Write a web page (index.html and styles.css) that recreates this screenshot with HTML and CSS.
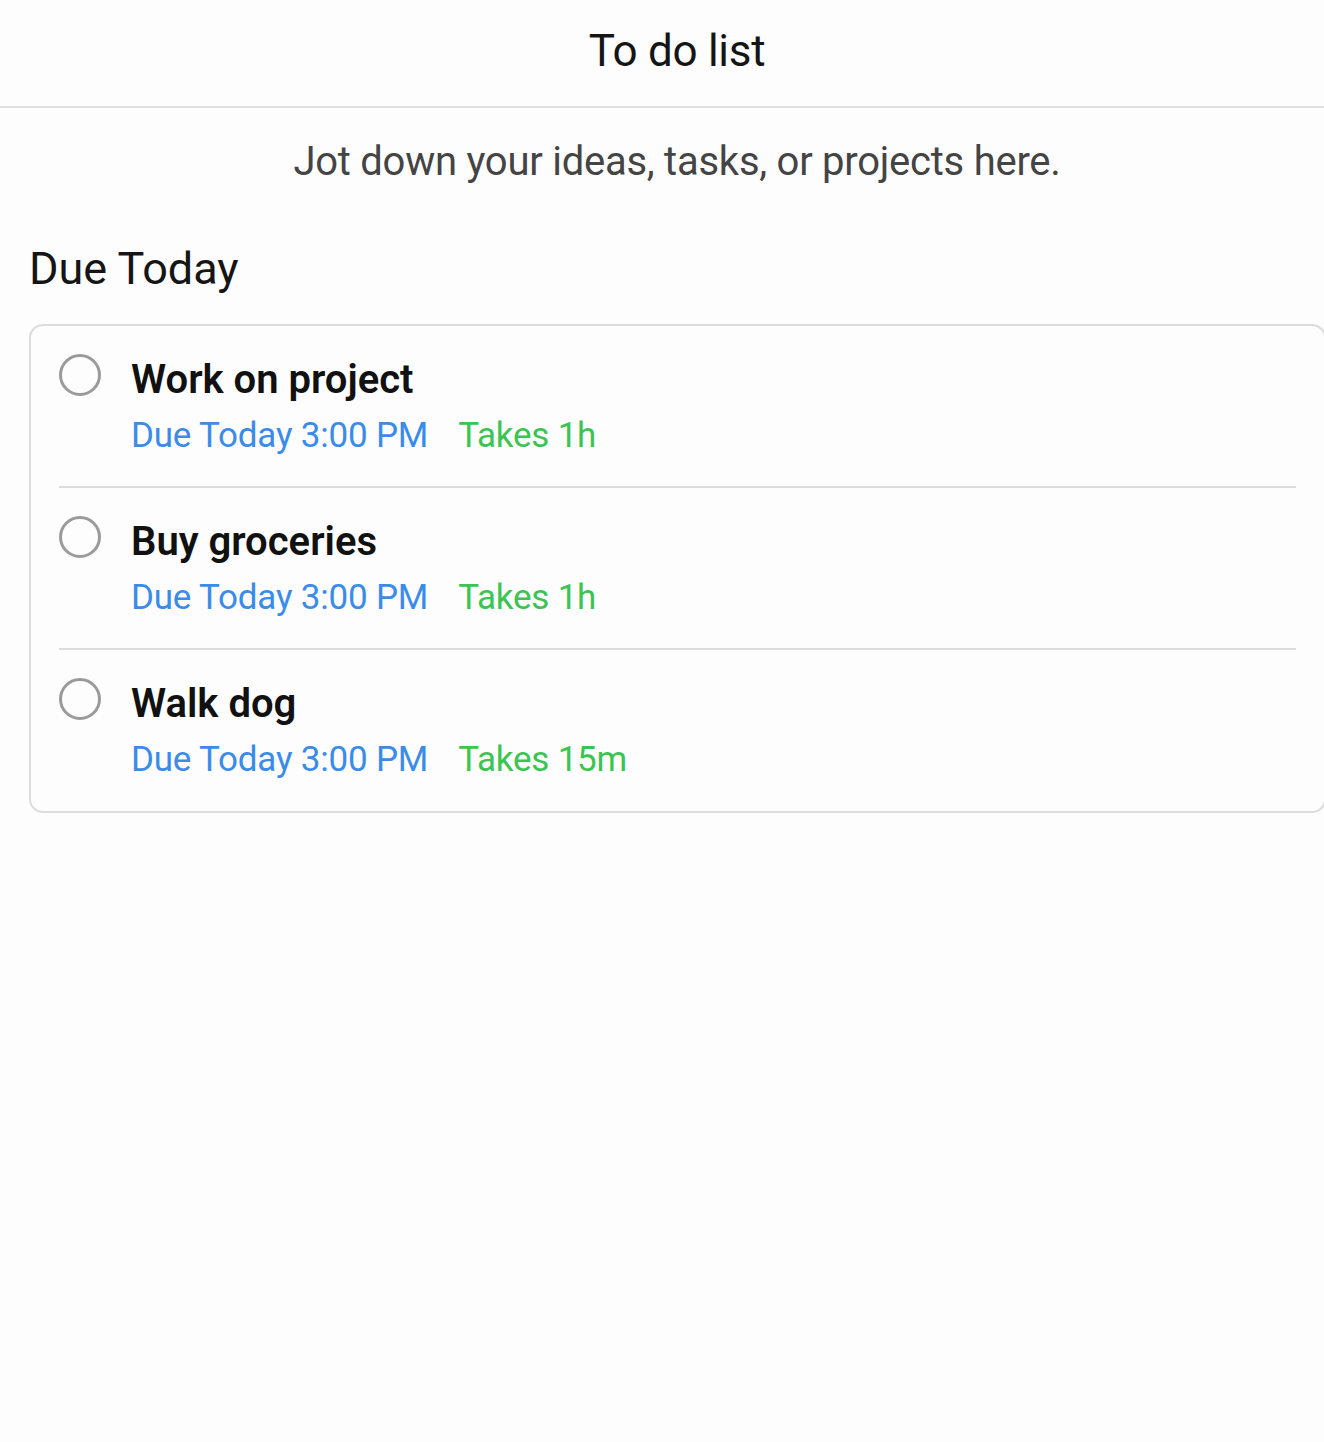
FILE: index.html
```html
<!DOCTYPE html>
<html lang="en">
<head>
<meta charset="utf-8">
<title>To do list</title>
<link rel="stylesheet" href="styles.css">
</head>
<body>
<header class="topbar"><h1 class="title">To do list</h1></header>
<main class="content">
  <p class="intro">Jot down your ideas, tasks, or projects here.</p>
  <section class="group">
    <h2 class="group-title">Due Today</h2>
    <ul class="card">
      <li class="task">
        <span class="check"></span>
        <div class="task-body">
          <div class="task-name">Work on project</div>
          <div class="task-meta"><span class="due">Due Today 3:00 PM</span><span class="takes">Takes 1h</span></div>
        </div>
      </li>
      <li class="task">
        <span class="check"></span>
        <div class="task-body">
          <div class="task-name">Buy groceries</div>
          <div class="task-meta"><span class="due">Due Today 3:00 PM</span><span class="takes">Takes 1h</span></div>
        </div>
      </li>
      <li class="task">
        <span class="check"></span>
        <div class="task-body">
          <div class="task-name">Walk dog</div>
          <div class="task-meta"><span class="due">Due Today 3:00 PM</span><span class="takes">Takes 15m</span></div>
        </div>
      </li>
    </ul>
  </section>
</main>
</body>
</html>
```
FILE: styles.css
```css
html, body {
  margin: 0;
  padding: 0;
  background: #fdfdfd;
}
html {
  overflow: hidden;
}
body {
  font-family: Roboto, "Open Sans", sans-serif;
  color: #111;
  width: 1354px;
  height: 1442px;
}
.topbar {
  box-sizing: border-box;
  height: 108px;
  padding-top: 21px;
  border-bottom: 2px solid #dedede;
  text-align: center;
}
.title {
  margin: 0;
  font-size: 44px;
  font-weight: 400;
  letter-spacing: -0.3px;
  line-height: 60px;
  color: #151515;
}
.intro {
  margin: 29px 0 0;
  text-align: center;
  font-size: 40px;
  letter-spacing: -0.25px;
  line-height: 50px;
  color: #444;
}
.group {
  padding: 0 28px 0 29px;
}
.group-title {
  margin: 54px 0 0;
  font-size: 45px;
  font-weight: 400;
  line-height: 56px;
  color: #151515;
}
.card {
  list-style: none;
  margin: 27px 0 0;
  padding: 0 28px;
  border: 2px solid #dcdcdc;
  border-radius: 14px;
  background: #fdfdfd;
}
.task {
  display: flex;
  align-items: flex-start;
  gap: 30px;
  padding: 28px 0 27px;
  border-bottom: 2px solid #dcdcdc;
}
.task:last-child {
  border-bottom: none;
  padding-bottom: 28px;
}
.check {
  flex: none;
  width: 36px;
  height: 36px;
  border: 3px solid #9a9a9a;
  border-radius: 50%;
}
.task-body {
  display: flex;
  flex-direction: column;
  padding-top: 2px;
}
.task-name {
  font-size: 40px;
  font-weight: 600;
  line-height: 48px;
  color: #111;
}
.task-meta {
  margin-top: 9px;
  display: flex;
  gap: 30px;
  font-size: 35px;
  letter-spacing: -0.2px;
  line-height: 46px;
}
.due {
  color: #3b8bea;
}
.takes {
  color: #3cc453;
}
```
